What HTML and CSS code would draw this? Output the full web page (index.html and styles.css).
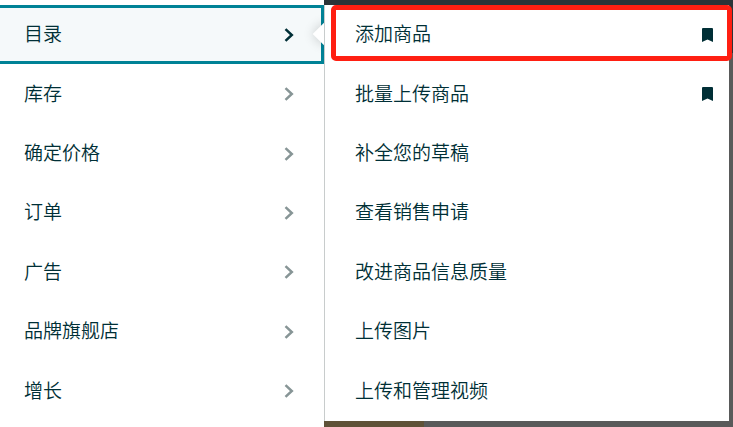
FILE: index.html
```html
<!DOCTYPE html>
<html lang="zh">

<head>
    <meta charset="UTF-8">
    <meta name="viewport" content="width=device-width, initial-scale=1.0">
    <title>目录</title>
    <link rel="stylesheet" href="styles.css">
</head>

<body>
    <svg width="0" height="0" class="sprite" aria-hidden="true">
        <symbol id="chevron" viewBox="0 0 10 14">
            <path d="M1.500 1.200 7.800 7l-6.300 5.800" fill="none" stroke="currentColor" stroke-width="2.500" />
        </symbol>
        <symbol id="bookmark" viewBox="0 0 11 14">
            <path d="M1 0h9a1 1 0 0 1 1 1v13L5.500 11.500 0 14V1a1 1 0 0 1 1-1z" fill="currentColor" />
        </symbol>
    </svg>
    <div class="layout">
        <nav class="menu">
            <a href="#" class="menu-item active"><span class="label">目录</span><svg class="chevron"><use href="#chevron" /></svg></a>
            <a href="#" class="menu-item"><span class="label">库存</span><svg class="chevron"><use href="#chevron" /></svg></a>
            <a href="#" class="menu-item"><span class="label">确定价格</span><svg class="chevron"><use href="#chevron" /></svg></a>
            <a href="#" class="menu-item"><span class="label">订单</span><svg class="chevron"><use href="#chevron" /></svg></a>
            <a href="#" class="menu-item"><span class="label">广告</span><svg class="chevron"><use href="#chevron" /></svg></a>
            <a href="#" class="menu-item"><span class="label">品牌旗舰店</span><svg class="chevron"><use href="#chevron" /></svg></a>
            <a href="#" class="menu-item"><span class="label">增长</span><svg class="chevron"><use href="#chevron" /></svg></a>
        </nav>
        <div class="page">
            <nav class="submenu">
                <div class="submenu-item highlight">
                    <a href="#" class="label">添加商品</a>
                    <button class="bookmark" aria-label="收藏 添加商品"><svg><use href="#bookmark" /></svg></button>
                </div>
                <div class="submenu-item">
                    <a href="#" class="label">批量上传商品</a>
                    <button class="bookmark" aria-label="收藏 批量上传商品"><svg><use href="#bookmark" /></svg></button>
                </div>
                <div class="submenu-item"><a href="#" class="label">补全您的草稿</a></div>
                <div class="submenu-item"><a href="#" class="label">查看销售申请</a></div>
                <div class="submenu-item"><a href="#" class="label">改进商品信息质量</a></div>
                <div class="submenu-item"><a href="#" class="label">上传图片</a></div>
                <div class="submenu-item"><a href="#" class="label">上传和管理视频</a></div>
            </nav>
            <div class="page-bottom"></div>
        </div>
    </div>
</body>

</html>
```

FILE: styles.css
```css
:root {
    --text-color: #002f36;
    --accent-color: #008296;
    --active-bg: #f5f9fa;
    --icon-color: #879596;
    --highlight-color: #ff1f12;
    --header-bg: #2b3438;
    --page-bg: #595a5a;
}

* {
    box-sizing: border-box;
}

body {
    margin: 0;
    font-family: "Noto Sans CJK SC", sans-serif;
    font-size: 19px;
    font-weight: 350;
    line-height: 28px;
    color: var(--text-color);
    background: white;
}

a {
    color: inherit;
    text-decoration: none;
}

.sprite {
    position: absolute;
}

.layout {
    display: flex;
    min-height: 100vh;
}

.label {
    padding-bottom: 3px;
}

/* 一级菜单 */
.menu {
    display: flex;
    flex-direction: column;
    flex: 0 0 324px;
    padding: 5px 0 6px;
    background: white;
}

.menu-item {
    position: relative;
    display: flex;
    flex: 1;
    align-items: center;
    justify-content: space-between;
    padding: 0 30px 0 24px;
    border: 3px solid transparent;
    border-left: none;
    border-right-width: 0;
}

.menu-item.active {
    padding-right: 27px;
    border-color: var(--accent-color);
    border-right-width: 3px;
    background: var(--active-bg);
}

/* 指向当前菜单的箭头 */
.menu-item.active::after {
    content: "";
    position: absolute;
    top: 50%;
    right: -11px;
    width: 16px;
    height: 16px;
    margin-top: -9px;
    background: white;
    box-shadow: 0 0 12px rgba(0, 0, 0, 0.2);
    transform: rotate(45deg);
}

.chevron {
    width: 10px;
    height: 14px;
    color: var(--icon-color);
}

.active .chevron {
    color: var(--text-color);
}

/* 菜单后面的页面 */
.page {
    display: flex;
    flex: 1;
    flex-direction: column;
    padding-right: 4px;
    border-top: 5px solid var(--header-bg);
    background: linear-gradient(var(--header-bg) 48px, var(--page-bg) 48px);
}

.page-bottom {
    height: 6px;
    background: linear-gradient(to right, #5f5238 100px, var(--page-bg) 100px);
}

/* 二级菜单 */
.submenu {
    position: relative;
    display: flex;
    flex: 1;
    flex-direction: column;
    border-left: 1px solid #c8cccc;
    background: white;
}

.submenu-item {
    position: relative;
    display: flex;
    flex: 1;
    align-items: center;
    justify-content: space-between;
    padding: 0 16px 0 30px;
}

.submenu-item.highlight::after {
    content: "";
    position: absolute;
    inset: 0 -3px 3px 6px;
    border: 5px solid var(--highlight-color);
    border-radius: 5px;
    pointer-events: none;
}

.bookmark {
    display: flex;
    padding: 0;
    border: none;
    background: none;
    color: inherit;
    cursor: pointer;
}

.bookmark svg {
    width: 11px;
    height: 14px;
}
```
